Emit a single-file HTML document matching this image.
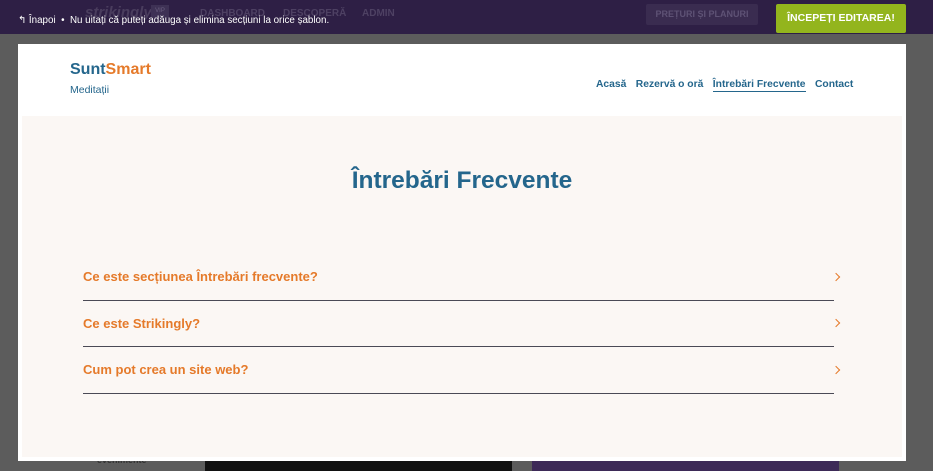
<!DOCTYPE html>
<html><head><meta charset="utf-8"><style>
*{margin:0;padding:0;box-sizing:border-box}
body{width:933px;height:471px;overflow:hidden;background:#5c5c5c;font-family:"Liberation Sans",sans-serif;position:relative}
.top{position:absolute;left:0;top:0;width:933px;height:34px;background:#2e1f45}
.abs{position:absolute;white-space:nowrap}
.panel{position:absolute;left:18px;top:44px;width:888px;height:417px;background:#fff}
.cream{position:absolute;left:4px;top:72px;width:880px;height:341px;background:#fbf7f4}
.nav a{color:#24668c;font-weight:bold;font-size:10.3px;margin-left:5px;text-decoration:none}
.q{position:absolute;left:61px;color:#e57a2a;font-weight:bold;font-size:13px}
.line{position:absolute;left:61px;width:751px;height:1.3px;background:#4a4a55}
.chev{position:absolute;left:811px;width:6px;height:6px;border-top:1.2px solid #e57a2a;border-right:1.2px solid #e57a2a;transform:rotate(45deg)}
</style></head><body>
<div class="top">
<div class="abs" style="left:85px;top:4px;color:#4a3d5e;font-style:italic;font-weight:bold;font-size:15px">strikingly</div>
<div class="abs" style="left:151px;top:5px;width:18px;height:13px;background:#3e3155;color:#6b5f80;font-size:6px;text-align:center;line-height:13px">VIP</div>
<div class="abs" style="left:200px;top:8px;color:#4e4163;font-weight:bold;font-size:10px">DASHBOARD</div>
<div class="abs" style="left:283px;top:8px;color:#4e4163;font-weight:bold;font-size:10px">DESCOPERĂ</div>
<div class="abs" style="left:362px;top:8px;color:#4e4163;font-weight:bold;font-size:10px">ADMIN</div>
<div class="abs" style="left:18px;top:15px;color:#fff;font-size:9.8px">↰ Înapoi &nbsp;•&nbsp; Nu uitați că puteți adăuga și elimina secțiuni la orice șablon.</div>
<div class="abs" style="left:646px;top:4px;width:112px;height:21px;background:#3a2c50;border-radius:2px;color:#5e5275;font-weight:bold;font-size:9px;text-align:center;line-height:21px">PREȚURI ȘI PLANURI</div>
<div class="abs" style="left:776px;top:4px;width:130px;height:29px;background:#93b51d;border-radius:2px;color:#fff;font-weight:bold;font-size:10.5px;text-align:center;line-height:28px">ÎNCEPEȚI EDITAREA!</div>
</div>
<div class="abs" style="left:97px;top:455px;color:#333;font-weight:bold;font-size:9px">evenimente</div>
<div class="abs" style="left:205px;top:461px;width:307px;height:10px;background:#111"></div>
<div class="abs" style="left:532px;top:461px;width:307px;height:10px;background:#3d2a57"></div>
<div class="panel">
<div class="abs" style="left:52px;top:17px;font-weight:bold;font-size:16px;color:#24668c">Sunt<span style="color:#e57a2a">Smart</span></div>
<div class="abs" style="left:52px;top:40px;font-size:10.5px;color:#24668c">Meditații</div>
<div class="abs nav" style="left:573px;top:30px"><a>Acasă</a> <a>Rezervă o oră</a> <a style="border-bottom:1.2px solid #24668c;padding-bottom:1px">Întrebări Frecvente</a> <a>Contact</a></div>
<div class="cream">
<div class="abs" style="left:0;width:880px;top:51px;text-align:center;color:#24668c;font-weight:bold;font-size:24.5px">Întrebări Frecvente</div>
<div class="q" style="top:153px">Ce este secțiunea Întrebări frecvente?</div>
<div class="chev" style="top:158px"></div>
<div class="line" style="top:184px"></div>
<div class="q" style="top:200px">Ce este Strikingly?</div>
<div class="chev" style="top:204px"></div>
<div class="line" style="top:230px"></div>
<div class="q" style="top:246px">Cum pot crea un site web?</div>
<div class="chev" style="top:251px"></div>
<div class="line" style="top:277px"></div>
</div>
</div>
</body></html>
